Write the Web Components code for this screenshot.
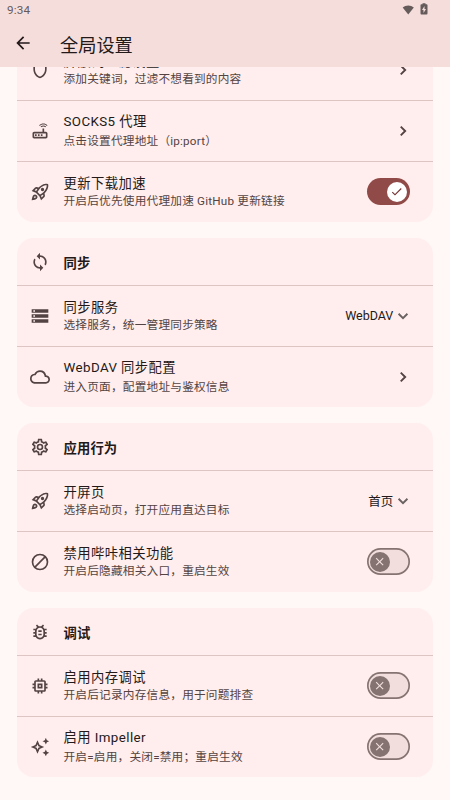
<!DOCTYPE html>
<html lang="zh-CN">
<head>
<meta charset="utf-8">
<title>全局设置</title>
<style>
html,body{margin:0;height:100%;overflow:hidden}
body{font-family:Roboto,"Noto Sans CJK SC",sans-serif;background:#fff8f6;color:#231919}
</style>
</head>
<body>
<settings-page>
  <status-bar slot="bar" time="9:34"></status-bar>
  <app-bar slot="bar">全局设置</app-bar>
  <settings-card>
    <settings-row icon="shield" control="chevron">屏蔽词过滤设置<span slot="sub">添加关键词，过滤不想看到的内容</span></settings-row>
    <settings-row icon="router" control="chevron" latin>SOCKS5 代理<span slot="sub">点击设置代理地址（ip:port）</span></settings-row>
    <settings-row icon="rocket" control="on">更新下载加速<span slot="sub">开启后优先使用代理加速 GitHub 更新链接</span></settings-row>
  </settings-card>
  <settings-card>
    <card-header icon="sync">同步</card-header>
    <settings-row icon="storage" control="select" value="WebDAV">同步服务<span slot="sub">选择服务，统一管理同步策略</span></settings-row>
    <settings-row icon="cloud" control="chevron" latin>WebDAV 同步配置<span slot="sub">进入页面，配置地址与鉴权信息</span></settings-row>
  </settings-card>
  <settings-card>
    <card-header icon="settings">应用行为</card-header>
    <settings-row icon="rocket" control="select" value="首页">开屏页<span slot="sub">选择启动页，打开应用直达目标</span></settings-row>
    <settings-row icon="block" control="off">禁用哔咔相关功能<span slot="sub">开启后隐藏相关入口，重启生效</span></settings-row>
  </settings-card>
  <settings-card>
    <card-header icon="bug">调试</card-header>
    <settings-row icon="memory" control="off">启用内存调试<span slot="sub">开启后记录内存信息，用于问题排查</span></settings-row>
    <settings-row icon="sparkle" control="off" latin>启用 Impeller<span slot="sub">开启=启用，关闭=禁用；重启生效</span></settings-row>
  </settings-card>
</settings-page>
<script>
const ICONS = {
  back:'<path d="M20 11H7.83l5.59-5.59L12 4l-8 8 8 8 1.41-1.41L7.83 13H20v-2z"/>',
  shield:'<path d="M12 2L4 5v6.09c0 5.05 3.41 9.76 8 10.91 4.59-1.15 8-5.86 8-10.91V5l-8-3zm6 9.09c0 4-2.55 7.7-6 8.83-3.45-1.13-6-4.82-6-8.83v-4.7l6-2.25 6 2.25v4.7z"/>',
  router:'<path d="M20.2 5.9l.8-.8C19.6 3.7 17.8 3 16 3s-3.6.7-5 2.1l.8.8C13 4.8 14.5 4.2 16 4.2s3 .6 4.2 1.7zm-.9.8c-.9-.9-2.1-1.4-3.3-1.4s-2.4.5-3.3 1.4l.8.8c.7-.7 1.6-1 2.5-1s1.8.3 2.5 1l.8-.8zM19 13h-2V9h-2v4H5c-1.1 0-2 .9-2 2v4c0 1.1.9 2 2 2h14c1.1 0 2-.9 2-2v-4c0-1.1-.9-2-2-2zm0 6H5v-4h14v4zM6 16h2v2H6zm3.500 0h2v2h-2zm3.500 0h2v2h-2z"/>',
  rocket:'<path d="M6 15c-.83 0-1.58.34-2.12.88C2.7 17.06 2 22 2 22s4.940-.7 6.120-1.880A2.996 2.996 0 0 0 6 15zm.71 3.710c-.28.28-2.170.760-2.170.760s.470-1.880.760-2.170c.170-.190.420-.300.700-.300a1.003 1.003 0 0 1 .710 1.710zM17.420 13.650c6.360-6.360 4.240-11.310 4.240-11.310s-4.950-2.120-11.310 4.240l-2.490-.5a2.030 2.030 0 0 0-1.810.550L2 10.690l5 2.140L11.170 17l2.140 5 4.050-4.050c.47-.47.68-1.150.55-1.810l-.49-2.490zM7.410 10.830l-1.910-.82 1.970-1.970 1.440.29c-.57.83-1.080 1.700-1.500 2.500zm6.580 7.670l-.82-1.910c.8-.42 1.670-.93 2.490-1.500l.29 1.440-1.960 1.970zM16 12.240c-1.320 1.320-3.380 2.400-4.040 2.730l-2.930-2.930c.32-.65 1.400-2.710 2.730-4.040 4.680-4.680 8.230-3.990 8.230-3.990s.69 3.550-3.990 8.230zM15 11a2 2 0 1 0 0-4 2 2 0 0 0 0 4z"/>',
  sync:'<path d="M12 4V1L8 5l4 4V6c3.310 0 6 2.690 6 6 0 1.010-.25 1.970-.7 2.800l1.460 1.460C19.540 15.030 20 13.570 20 12c0-4.420-3.580-8-8-8zm0 14c-3.310 0-6-2.690-6-6 0-1.010.25-1.970.7-2.800L5.240 7.740C4.460 8.970 4 10.430 4 12c0 4.420 3.580 8 8 8v3l4-4-4-4v3z"/>',
  storage:'<path d="M2 20h20v-4H2v4zm2-3h2v2H4v-2zM2 4v4h20V4H2zm4 3H4V5h2v2zm-4 7h20v-4H2v4zm2-3h2v2H4v-2z"/>',
  cloud:'<path d="M19.350 10.040A7.490 7.490 0 0 0 12 4C9.110 4 6.600 5.640 5.350 8.040A5.994 5.994 0 0 0 0 14c0 3.310 2.690 6 6 6h13c2.760 0 5-2.240 5-5 0-2.640-2.050-4.780-4.650-4.960zM19 18H6c-2.210 0-4-1.790-4-4 0-2.050 1.530-3.760 3.560-3.970l1.070-.11.5-.95A5.469 5.469 0 0 1 12 6c2.620 0 4.880 1.860 5.390 4.430l.3 1.500 1.530.11A2.980 2.980 0 0 1 22 15c0 1.650-1.350 3-3 3z"/>',
  settings:'<path d="M19.430 12.980c.04-.32.07-.64.07-.98s-.03-.66-.07-.98l2.110-1.650c.19-.15.24-.42.12-.64l-2-3.460a.5.5 0 0 0-.61-.22l-2.490 1c-.52-.4-1.080-.73-1.690-.98l-.38-2.650A.488.488 0 0 0 14 2h-4c-.25 0-.46.18-.49.42l-.38 2.650c-.61.25-1.170.59-1.690.98l-2.490-1a.5.5 0 0 0-.61.22l-2 3.460c-.13.22-.07.49.12.64l2.110 1.650c-.04.32-.07.65-.07.98s.03.66.07.98l-2.110 1.650c-.19.15-.24.42-.12.64l2 3.460c.12.22.39.3.61.22l2.490-1c.52.4 1.080.73 1.690.98l.38 2.650c.03.24.24.42.49.42h4c.25 0 .46-.18.49-.42l.38-2.650c.61-.25 1.170-.59 1.690-.98l2.490 1c.23.09.49 0 .61-.22l2-3.460c.12-.22.07-.49-.12-.64l-2.110-1.650zm-1.980-1.710c.04.31.05.52.05.73s-.02.43-.05.73l-.14 1.130.89.7 1.080.84-.7 1.210-1.270-.51-1.040-.42-.9.68c-.43.32-.84.56-1.250.73l-1.060.43-.16 1.130-.2 1.350h-1.400l-.19-1.350-.16-1.130-1.060-.43c-.43-.18-.83-.41-1.230-.71l-.91-.7-1.060.43-1.270.51-.7-1.210 1.080-.84.89-.7-.14-1.130c-.03-.31-.05-.54-.05-.74s.02-.43.05-.73l.14-1.130-.89-.7-1.080-.84.7-1.210 1.270.51 1.040.42.9-.68c.43-.32.84-.56 1.250-.73l1.060-.43.16-1.130.2-1.350h1.390l.19 1.350.16 1.130 1.060.43c.43.18.83.41 1.230.71l.91.7 1.060-.43 1.270-.51.7 1.210-1.070.85-.89.7.14 1.130zM12 8a4 4 0 1 0 0 8 4 4 0 0 0 0-8zm0 6a2 2 0 1 1 0-4 2 2 0 0 1 0 4z"/>',
  block:'<circle cx="12" cy="12" r="9" fill="none" stroke="currentColor" stroke-width="2"/><path d="M5.640 18.360L18.360 5.640" stroke="currentColor" stroke-width="2"/>',
  bug:'<path d="M20 8h-2.810a5.985 5.985 0 0 0-1.820-1.960L17 4.410 15.590 3l-2.170 2.170a6.002 6.002 0 0 0-2.830 0L8.410 3 7 4.410l1.620 1.630C7.880 6.550 7.260 7.220 6.810 8H4v2h2.090c-.05.33-.09.66-.09 1v1H4v2h2v1c0 .34.04.67.09 1H4v2h2.810c1.040 1.790 2.970 3 5.190 3s4.150-1.210 5.190-3H20v-2h-2.090c.05-.33.09-.66.09-1v-1h2v-2h-2v-1c0-.34-.04-.67-.09-1H20V8zm-4 7c0 2.210-1.790 4-4 4s-4-1.790-4-4v-4c0-2.210 1.790-4 4-4s4 1.790 4 4v4zm-6-1h4v2h-4zm0-4h4v2h-4z"/>',
  memory:'<path d="M15 9H9v6h6V9zm-2 4h-2v-2h2v2zm8-2V9h-2V7c0-1.100-.9-2-2-2h-2V3h-2v2h-2V3H9v2H7c-1.100 0-2 .9-2 2v2H3v2h2v2H3v2h2v2c0 1.100.9 2 2 2h2v2h2v-2h2v2h2v-2h2c1.100 0 2-.9 2-2v-2h2v-2h-2v-2h2zm-4 6H7V7h10v10z"/>',
  sparkle:'<path d="M19 9l1.250-2.750L23 5l-2.750-1.250L19 1l-1.250 2.750L15 5l2.750 1.250zM19 15l-1.250 2.750L15 19l2.750 1.250L19 23l1.250-2.750L23 19l-2.750-1.250zM11.500 9.500L9 4 6.500 9.500 1 12l5.500 2.500L9 20l2.500-5.500L17 12l-5.500-2.500zm-1.510 3.490L9 15.170l-.99-2.180L5.830 12l2.180-.99L9 8.830l.99 2.180 2.180.99-2.180.99z"/>',
  chevron:'<path d="M9.300 6.700L14.600 12 9.300 17.300" fill="none" stroke="currentColor" stroke-width="2.300"/>',
  down:'<path d="M6.700 9.300L12 14.600 17.300 9.300" fill="none" stroke="currentColor" stroke-width="2.300"/>',
  check:'<path d="M9 16.170L4.830 12l-1.420 1.410L9 19 21 7l-1.410-1.410z"/>',
  close:'<path d="M19 6.410L17.590 5 12 10.590 6.410 5 5 6.410 10.590 12 5 17.590 6.410 19 12 13.410 17.590 19 19 17.590 13.410 12z"/>'
};

class Base extends HTMLElement {
  connectedCallback() {
    if (!this.shadowRoot) this.attachShadow({mode:'open'}).innerHTML = this.render();
  }
  attr(n) { return this.getAttribute(n) || ''; }
}

customElements.define('ui-icon', class extends Base {
  render() {
    return `<style>:host{display:block;flex:none;width:20px;height:20px}svg{display:block;width:100%;height:100%}</style>
    <svg viewBox="0 0 24 24" fill="currentColor">${ICONS[this.attr('name')]}</svg>`;
  }
});

customElements.define('status-bar', class extends Base {
  render() {
    return `<style>:host{display:flex;align-items:center;height:20px;padding:0 22.500px 0 7px;color:#655b5b;font-size:11.700px;letter-spacing:.2px}
    span{flex:1}svg{margin-bottom:2px}.wifi{width:12.500px;height:11px;margin-right:5px}.bat{width:8px;height:12px}</style>
    <span>${this.attr('time')}</span>
    <svg class="wifi" viewBox="0 0 13 12" fill="currentColor"><path d="M6.500 11.500L.4 3.900C3.800.8 9.200.8 12.600 3.900z"/></svg>
    <svg class="bat" viewBox="0 0 8 12"><path fill="currentColor" d="M2.500.3h3v1H6.600q.9 0 .9.9v8.400q0 .9-.9.9H1.400q-.9 0-.9-.9V2.200q0-.9.9-.9h1.100z"/><path fill="#f5dddc" d="M4.500 3L2 7h1.500v3L6 6H4.500z"/></svg>`;
  }
});

customElements.define('app-bar', class extends Base {
  render() {
    return `<style>:host{display:flex;align-items:center;height:46.670px;padding-left:13.330px;font-size:18.200px;line-height:24px;color:#231919}
    h1{font:inherit;margin:5px 0 0 26.700px}</style><ui-icon name="back"></ui-icon><h1><slot></slot></h1>`;
  }
});

customElements.define('settings-page', class extends Base {
  render() {
    return `<style>:host{display:flex;flex-direction:column;height:800px;overflow:hidden}
    header{flex:none;height:66.670px;background:#f5dddc}
    main{flex:1;min-height:0;overflow:hidden;display:flex;flex-direction:column;justify-content:flex-end;gap:16.667px;padding:0 16.667px 23.330px}</style>
    <header><slot name="bar"></slot></header><main><slot></slot></main>`;
  }
});

customElements.define('settings-card', class extends Base {
  render() {
    return `<style>:host{display:flex;flex:none;flex-direction:column;background:#ffeeed;border-radius:16.667px;overflow:hidden}
    ::slotted(:not(:last-child)){border-bottom:1px solid #dcc5c3}</style><slot></slot>`;
  }
});

customElements.define('card-header', class extends Base {
  render() {
    return `<style>:host{display:flex;align-items:center;gap:13.500px;height:46.333px;padding-left:13.330px;font-size:13.330px;font-weight:700;letter-spacing:.125px}
    ui-icon{color:#534342}span{padding-top:1px}</style><ui-icon name="${this.attr('icon')}"></ui-icon><span><slot></slot></span>`;
  }
});

customElements.define('toggle-switch', class extends Base {
  render() {
    const on = this.hasAttribute('on');
    return `<style>:host{display:flex;align-items:center;box-sizing:border-box;width:43.330px;height:26.670px;border-radius:14px;padding:0 3.330px;
      ${on ? 'background:#904a48;justify-content:flex-end' : 'background:#f1dedd;box-shadow:inset 0 0 0 1.667px #857371'}}
    div{display:grid;place-items:center;width:20px;height:20px;border-radius:50%;background:${on ? '#fff' : '#857371'};color:${on ? '#733332' : '#f1dedd'}}
    ui-icon{width:13.330px;height:13.330px}</style><div><ui-icon name="${on ? 'check' : 'close'}"></ui-icon></div>`;
  }
});

customElements.define('settings-row', class extends Base {
  render() {
    const c = this.attr('control');
    const end = c === 'chevron' ? '<ui-icon class="end" name="chevron"></ui-icon>'
      : c === 'select' ? `<span class="value">${this.attr('value')}</span><ui-icon class="end down" name="down"></ui-icon>`
      : `<toggle-switch ${c === 'on' ? 'on' : ''}></toggle-switch>`;
    return `<style>:host{display:flex;align-items:center;height:60px;padding:0 23.330px 0 13.330px}
    ui-icon{color:#534342}
    .text{flex:1;margin-left:13.500px}
    .title{font-size:13.330px;letter-spacing:.417px;line-height:19px}
    .sub{margin-top:-1px;font-size:11.670px;letter-spacing:.208px;line-height:18px;color:#534342}
    :host([latin]) .title{line-height:20px}
    :host([latin]) .sub{margin-top:0}
    :host([latin]) .text{margin-top:1px}
    .value{font-size:12.500px}
    .end{margin-right:-3.330px}.down{color:#6a6262}</style>
    <ui-icon name="${this.attr('icon')}"></ui-icon>
    <div class="text"><div class="title"><slot></slot></div><div class="sub"><slot name="sub"></slot></div></div>${end}`;
  }
});
</script>
</body>
</html>
